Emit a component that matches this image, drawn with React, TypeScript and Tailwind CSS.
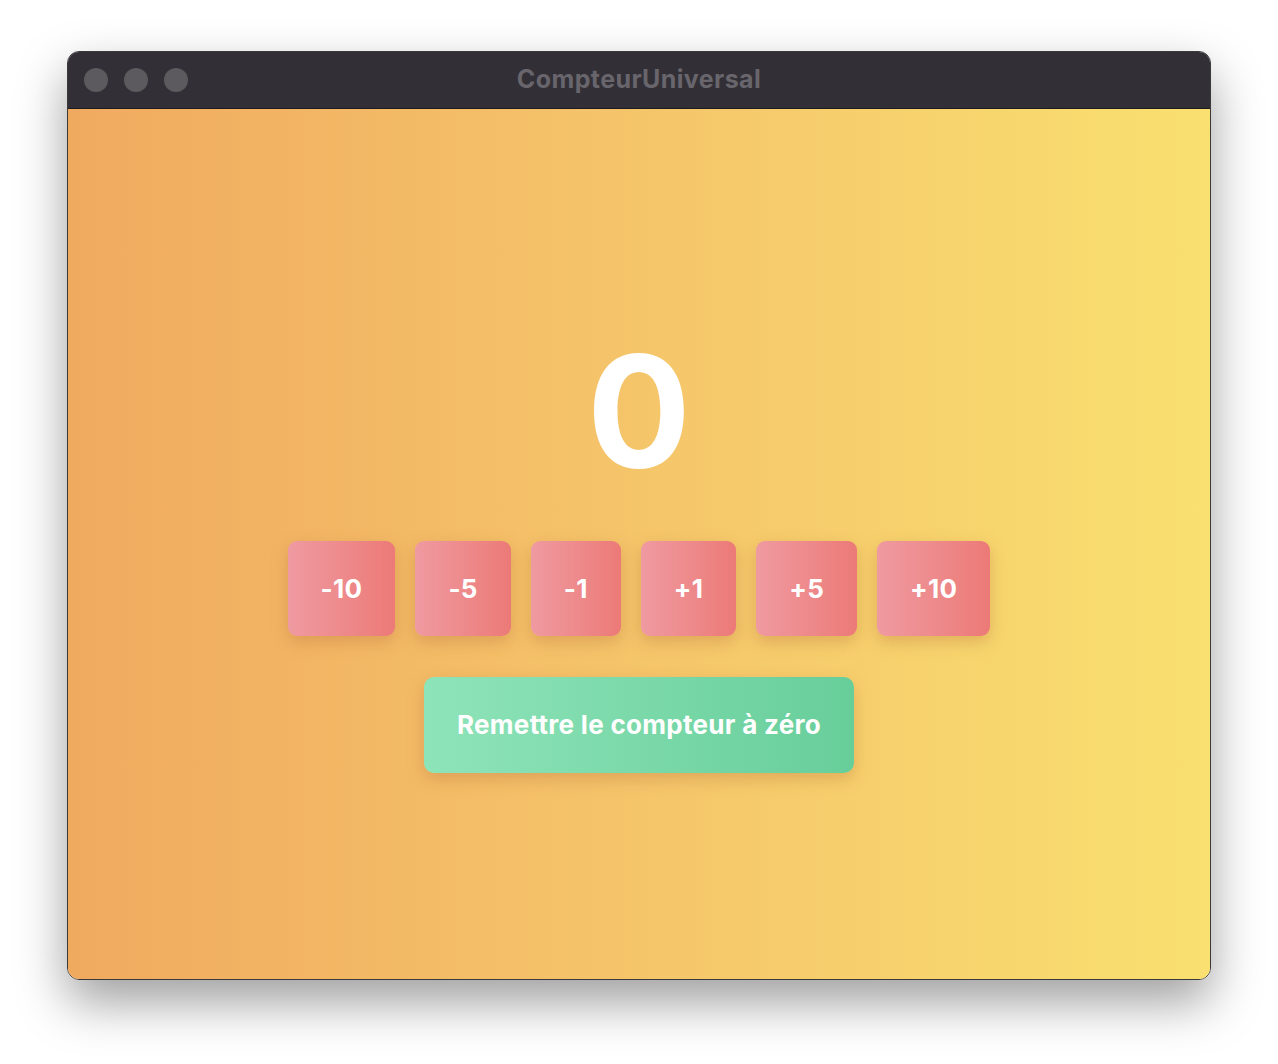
const steps = [-10, -5, -1, 1, 5, 10];

export default function App() {
  return (
    <div className="min-h-[1064px] w-full bg-white pt-[51px]" style={{ fontFamily: 'Inter, "Noto Sans", sans-serif' }}>
      <div className="mx-auto flex h-[929px] w-[1144px] flex-col overflow-hidden rounded-[12px] border border-[#3a3a3d] shadow-[0_22px_50px_rgba(0,0,0,0.38)]">
        <div className="relative flex h-[57px] shrink-0 items-center justify-center border-b border-[#1c1b1f] bg-[#323036]">
          <div className="absolute left-[16px] top-1/2 flex -translate-y-1/2 gap-[16px]">
            <span className="h-[24px] w-[24px] rounded-full bg-[#5c595f]" />
            <span className="h-[24px] w-[24px] rounded-full bg-[#5c595f]" />
            <span className="h-[24px] w-[24px] rounded-full bg-[#5c595f]" />
          </div>
          <span className="text-[25px] font-bold tracking-[0.4px] text-[#68656c]">CompteurUniversal</span>
        </div>
        <div className="flex flex-1 flex-col items-center justify-center bg-gradient-to-r from-[#f0aa5f] via-[#f5c56a] to-[#f9e070] pt-[19px]">
          <div className="text-[154px] font-bold leading-none text-white">0</div>
          <div className="mt-[53px] flex gap-[20px]">
            {steps.map(s => (
              <button
                key={s}
                className="rounded-[9px] bg-gradient-to-r from-[#ef9aa1] to-[#ec7a77] px-[33px] py-[33px] text-[26px] font-bold leading-[29px] tracking-[0.3px] text-white shadow-[0_6px_16px_rgba(180,110,60,0.35)]"
              >
                {s > 0 ? `+${s}` : s}
              </button>
            ))}
          </div>
          <button className="mt-[41px] rounded-[10px] bg-gradient-to-r from-[#8ee4b9] to-[#67ce9a] px-[33px] py-[33px] text-[26px] font-bold leading-[30px] tracking-[0.3px] text-white shadow-[0_6px_16px_rgba(180,110,60,0.35)]">
            Remettre le compteur à zéro
          </button>
        </div>
      </div>
    </div>
  );
}
